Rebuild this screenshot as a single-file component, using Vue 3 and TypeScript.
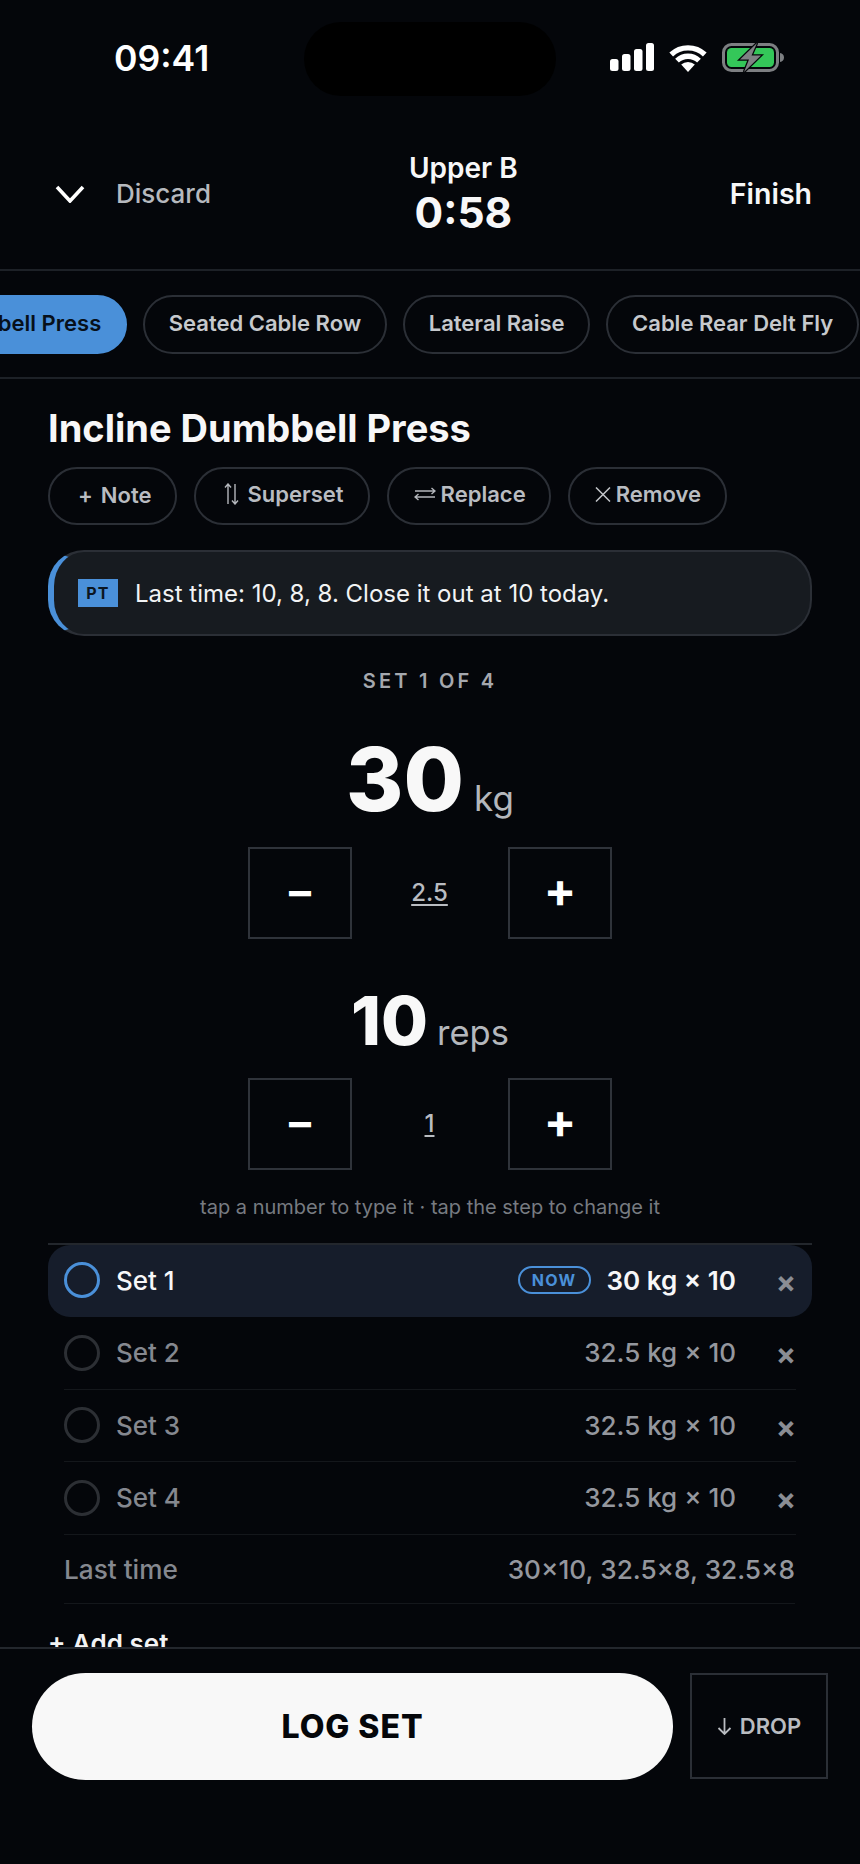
<template>
  <div class="phone">
    <div class="status">
      <span class="time">09:41</span>
      <div class="island"></div>
      <div class="status-icons">
        <svg class="signal" width="44" height="28" viewBox="0 0 44 28" fill="#fff">
          <rect x="0" y="16" width="8.5" height="12" rx="2.5" />
          <rect x="12" y="11" width="8.5" height="17" rx="2.5" />
          <rect x="24" y="6" width="8.5" height="22" rx="2.5" />
          <rect x="36" y="0" width="8" height="28" rx="2.5" />
        </svg>
        <svg class="wifi" width="38" height="29" viewBox="0 0 38 29" fill="none" stroke="#fff" stroke-width="5.4">
          <path d="M2.2 11.5a24.5 24.5 0 0 1 33.6 0" />
          <path d="M8 17.6a16 16 0 0 1 22 0" />
          <path d="M12.2 21.6a10 10 0 0 1 13.6 0L19 29z" fill="#fff" stroke="none" />
        </svg>
        <svg class="battery" width="62" height="29" viewBox="0 0 62 29">
          <rect x="1.5" y="1.5" width="54" height="26" rx="8" fill="none" stroke="#7d7f82" stroke-width="3" />
          <rect x="5" y="5" width="47" height="19" rx="4.5" fill="#34c759" />
          <path d="M58 10c2.5.5 4 2 4 4.5s-1.500 4-4 4.500z" fill="#7d7f82" />
          <path d="M35 0 18 16.500h9L22 29l17-16.500h-9.500z" fill="#7f8184" stroke="#05070a" stroke-width="2.500" paint-order="stroke" />
        </svg>
      </div>
    </div>

    <header class="top">
      <div class="top-left">
        <svg class="chevron" width="30" height="18" viewBox="0 0 30 18" fill="none" stroke="#fff" stroke-width="3.6">
          <path d="M2 2l13 14L28 2" />
        </svg>
        <span class="discard">Discard</span>
      </div>
      <div class="top-title">
        <div class="plan">Upper B</div>
        <div class="clock">0:58</div>
      </div>
      <span class="finish">Finish</span>
    </header>

    <nav class="chips">
      <span v-for="(c, i) in exercises" :key="c" :class="['chip', { active: i === 0 }]">{{ c }}</span>
    </nav>

    <main class="content">
      <h1 class="name">Incline Dumbbell Press</h1>

      <div class="actions">
        <button class="action note"><span class="plus">+</span>Note</button>
        <button class="action superset">
          <svg width="15" height="22" viewBox="0 0 15 22" fill="none" stroke="#b4b7bc" stroke-width="1.400">
            <path d="M4 21V1M1 4.500 4 1l3 3.500M11 1v20M8 17.500l3 3.500 3-3.500" />
          </svg>
          Superset
        </button>
        <button class="action replace">
          <svg width="22" height="14" viewBox="0 0 22 14" fill="none" stroke="#b4b7bc" stroke-width="1.400">
            <path d="M1 4h20M17.500 1 21 4l-3.500 3M21 10H1M4.500 7 1 10l3.500 3" />
          </svg>
          Replace
        </button>
        <button class="action remove">
          <svg width="16" height="15" viewBox="0 0 16 15" fill="none" stroke="#c2c5c9" stroke-width="1.500">
            <path d="M1 .5l14 14M15 .5l-14 14" />
          </svg>
          Remove
        </button>
      </div>

      <div class="coach">
        <span class="pt">PT</span>
        <span class="coach-text">Last time: 10, 8, 8. Close it out at 10 today.</span>
      </div>

      <div class="set-label">SET 1 OF 4</div>

      <div class="value weight"><span class="num">30</span><span class="unit">kg</span></div>
      <div class="stepper">
        <button class="step-btn minus">–</button>
        <span class="step">2.5</span>
        <button class="step-btn">+</button>
      </div>

      <div class="value reps"><span class="num">10</span><span class="unit">reps</span></div>
      <div class="stepper">
        <button class="step-btn minus">–</button>
        <span class="step">1</span>
        <button class="step-btn">+</button>
      </div>

      <p class="hint">tap a number to type it · tap the step to change it</p>

      <div class="sets">
        <div v-for="s in sets" :key="s.label" :class="['set-row', { current: s.current }]">
          <span class="dot"></span>
          <span class="set-name">{{ s.label }}</span>
          <span v-if="s.current" class="now">NOW</span>
          <span class="set-val">{{ s.value }}</span>
          <span class="del">×</span>
        </div>
        <div class="last-row">
          <span>Last time</span>
          <span class="last-val">30×10, 32.5×8, 32.5×8</span>
        </div>
      </div>

      <div class="add-set">+ Add set</div>
    </main>

    <footer class="bottom">
      <button class="log">LOG SET</button>
      <button class="drop">
        <svg width="15" height="17" viewBox="0 0 15 17" fill="none" stroke="#b9bcc1" stroke-width="1.800">
          <path d="M7.500 0v16M1.500 10l6 6 6-6" />
        </svg>
        DROP
      </button>
    </footer>
  </div>
</template>

<script setup lang="ts">
interface SetRow {
  label: string
  value: string
  current?: boolean
}

const exercises: string[] = ['Incline Dumbbell Press', 'Seated Cable Row', 'Lateral Raise', 'Cable Rear Delt Fly']

const sets: SetRow[] = [
  { label: 'Set 1', value: '30 kg × 10', current: true },
  { label: 'Set 2', value: '32.5 kg × 10' },
  { label: 'Set 3', value: '32.5 kg × 10' },
  { label: 'Set 4', value: '32.5 kg × 10' },
]
</script>

<style>
html,
body {
  margin: 0;
  background: #04060a;
}
</style>

<style scoped>
.phone {
  width: 860px;
  height: 1864px;
  display: flex;
  flex-direction: column;
  overflow: hidden;
  background: #04060a;
  color: #f7f7f8;
  font-family: Inter, "Liberation Sans", sans-serif;
}

button {
  font-family: inherit;
  background: transparent;
  padding: 0;
  cursor: pointer;
}

.status {
  display: flex;
  align-items: center;
  flex-shrink: 0;
  padding: 22px 0 0 114px;
}
.time {
  width: 190px;
  font-size: 35.6px;
  line-height: 70px;
  font-weight: 600;
  color: #fff;
}
.island {
  width: 252px;
  height: 74px;
  border-radius: 37px;
  background: #000;
}
.status-icons {
  display: flex;
  align-items: center;
  gap: 15px;
  margin-left: 54px;
  padding-bottom: 4px;
}

.top {
  display: flex;
  align-items: center;
  justify-content: space-between;
  flex-shrink: 0;
  height: 175px;
  padding: 22px 48px 0 55px;
  box-sizing: border-box;
  border-bottom: 2px solid #1d2127;
}
.top-left {
  display: flex;
  align-items: center;
  gap: 31px;
}
.discard {
  font-size: 26px;
  font-weight: 500;
  color: #b6b9be;
}
.top-title {
  text-align: center;
  margin: 0 14px 2px 0;
}
.plan {
  font-size: 28px;
  font-weight: 600;
  line-height: 38px;
  margin-bottom: 2px;
}
.clock {
  font-size: 42.5px;
  font-weight: 700;
  line-height: 47px;
}
.finish {
  font-size: 28.5px;
  font-weight: 600;
}

.chips {
  display: flex;
  justify-content: flex-end;
  gap: 16px;
  flex-shrink: 0;
  padding: 24px 1px 23px 0;
  border-bottom: 2px solid #1d2127;
  overflow: hidden;
}
.chip {
  flex-shrink: 0;
  height: 59px;
  box-sizing: border-box;
  padding: 0 23.75px 3px;
  display: flex;
  align-items: center;
  border: 2px solid #2b2f36;
  border-radius: 30px;
  font-size: 22px;
  font-weight: 600;
  color: #c6c9cd;
  white-space: nowrap;
}
.chip.active {
  background: #4a90d9;
  border-color: #4a90d9;
  color: #07101a;
}

.content {
  flex: 1;
  min-height: 0;
  overflow: hidden;
  padding: 0 48px;
}
.name {
  margin: 26px 0 0;
  font-size: 38px;
  line-height: 46px;
  font-weight: 700;
}

.actions {
  display: flex;
  gap: 17px;
  margin-top: 16px;
}
.action {
  height: 58px;
  box-sizing: border-box;
  padding: 0 24px 4px 25px;
  display: flex;
  align-items: center;
  gap: 5px;
  border: 2px solid #2b2f36;
  border-radius: 29px;
  font-size: 22px;
  font-weight: 600;
  color: #b9bcc1;
}
.action svg {
  flex-shrink: 0;
}
.note {
  padding-bottom: 2px;
  padding-left: 28px;
}
.plus {
  margin-right: 3px;
}
.superset {
  padding-left: 28px;
  gap: 8px;
}
.replace {
  padding-right: 23px;
}

.coach {
  display: flex;
  align-items: center;
  gap: 17px;
  height: 86px;
  box-sizing: border-box;
  margin-top: 25px;
  padding: 0 24px;
  background: #171b20;
  border: 2px solid #2b2f36;
  border-left: 6px solid #4a90d9;
  border-radius: 36px;
}
.pt {
  width: 40px;
  height: 28px;
  display: flex;
  align-items: center;
  justify-content: center;
  background: #4a90d9;
  color: #0b1622;
  font-size: 16px;
  font-weight: 700;
  letter-spacing: 0.08em;
}
.coach-text {
  font-size: 24px;
  color: #f2f3f4;
}

.set-label {
  margin-top: 33px;
  text-align: center;
  font-size: 20px;
  line-height: 24px;
  font-weight: 600;
  letter-spacing: 0.16em;
  color: #a5a8ae;
}

.value {
  display: flex;
  align-items: baseline;
  justify-content: center;
  gap: 10px;
  font-weight: 800;
  color: #f8f8f8;
}
.weight {
  margin-top: 31px;
}
.weight .num {
  font-size: 87.5px;
  line-height: 110px;
}
.weight .unit {
  font-size: 35px;
}
.reps {
  margin-top: 39px;
  gap: 9px;
}
.reps .num {
  font-size: 68px;
  line-height: 84px;
}
.reps .unit {
  font-size: 34.5px;
}
.unit {
  font-weight: 400;
  color: #b4b7bc;
}

.stepper {
  display: flex;
  align-items: center;
  justify-content: center;
  margin-top: 13px;
}
.reps + .stepper {
  margin-top: 16px;
}
.step-btn {
  width: 104px;
  height: 92px;
  box-sizing: border-box;
  padding-bottom: 6px;
  border: 2px solid #2f333a;
  color: #fff;
  font-size: 48px;
  font-weight: 700;
  line-height: 1;
}
.step-btn.minus {
  padding-bottom: 5px;
  font-size: 44px;
}
.step {
  width: 156px;
  box-sizing: border-box;
  padding: 0 1px 2px 0;
  text-align: center;
  font-size: 24px;
  font-weight: 500;
  color: #b9bcc1;
  text-decoration: underline 2px;
  text-underline-offset: 3px;
}

.hint {
  margin: 23px 0 0;
  text-align: center;
  font-size: 20px;
  line-height: 28px;
  color: #777b81;
}

.sets {
  margin-top: 22px;
  border-top: 2px solid #23272d;
}
.set-row {
  display: flex;
  align-items: center;
  height: 72.6px;
  box-sizing: border-box;
  margin: 0 16px;
  border-bottom: 1px solid #14171b;
  color: #85888f;
  font-size: 26px;
  font-weight: 500;
}
.set-row.current {
  margin: 0;
  padding: 0 16px 2px;
  height: 72px;
  background: #161d2b;
  border: 0;
  border-radius: 22px;
  color: #f7f7f8;
}
.dot {
  width: 36px;
  height: 36px;
  box-sizing: border-box;
  border: 3px solid #2c2f34;
  border-radius: 50%;
  margin-right: 16px;
}
.current .dot {
  border-color: #4a90d9;
}
.set-name {
  flex: 1;
}
.now {
  height: 28px;
  box-sizing: border-box;
  width: 73px;
  display: flex;
  align-items: center;
  justify-content: center;
  margin-right: 16px;
  border: 2px solid #4a90d9;
  border-radius: 14px;
  font-size: 16px;
  font-weight: 700;
  letter-spacing: 0.08em;
  color: #4a90d9;
}
.set-val {
  font-weight: 500;
  color: #94979e;
}
.current .set-val {
  font-weight: 600;
  color: #f7f7f8;
}
.del {
  width: 60px;
  text-align: right;
  font-size: 30px;
  font-weight: 700;
  line-height: 1;
  color: #8a8d94;
  padding-top: 3px;
}

.last-row {
  display: flex;
  align-items: center;
  justify-content: space-between;
  height: 69px;
  box-sizing: border-box;
  margin: 0 17px 0 16px;
  padding-top: 2px;
  border-bottom: 1px solid #14171b;
  font-size: 26.2px;
  font-weight: 500;
  color: #85888f;
}
.last-val {
  color: #94979e;
}

.add-set {
  margin-top: 24px;
  font-size: 26px;
  line-height: 32px;
  font-weight: 600;
  color: #f2f3f4;
}

.bottom {
  display: flex;
  gap: 17px;
  flex-shrink: 0;
  height: 217px;
  box-sizing: border-box;
  padding: 24px 32px 0;
  border-top: 2px solid #23272d;
  align-items: flex-start;
}
.log {
  flex: 1;
  height: 107px;
  border: 0;
  border-radius: 54px;
  background: #f8f8f8;
  color: #05070a;
  font-size: 32px;
  font-weight: 800;
  letter-spacing: 0.03em;
}
.drop {
  width: 138px;
  height: 106px;
  box-sizing: border-box;
  display: flex;
  align-items: center;
  justify-content: center;
  gap: 8px;
  border: 2px solid #2b2f36;
  color: #b9bcc1;
  font-size: 22px;
  font-weight: 600;
}
</style>
